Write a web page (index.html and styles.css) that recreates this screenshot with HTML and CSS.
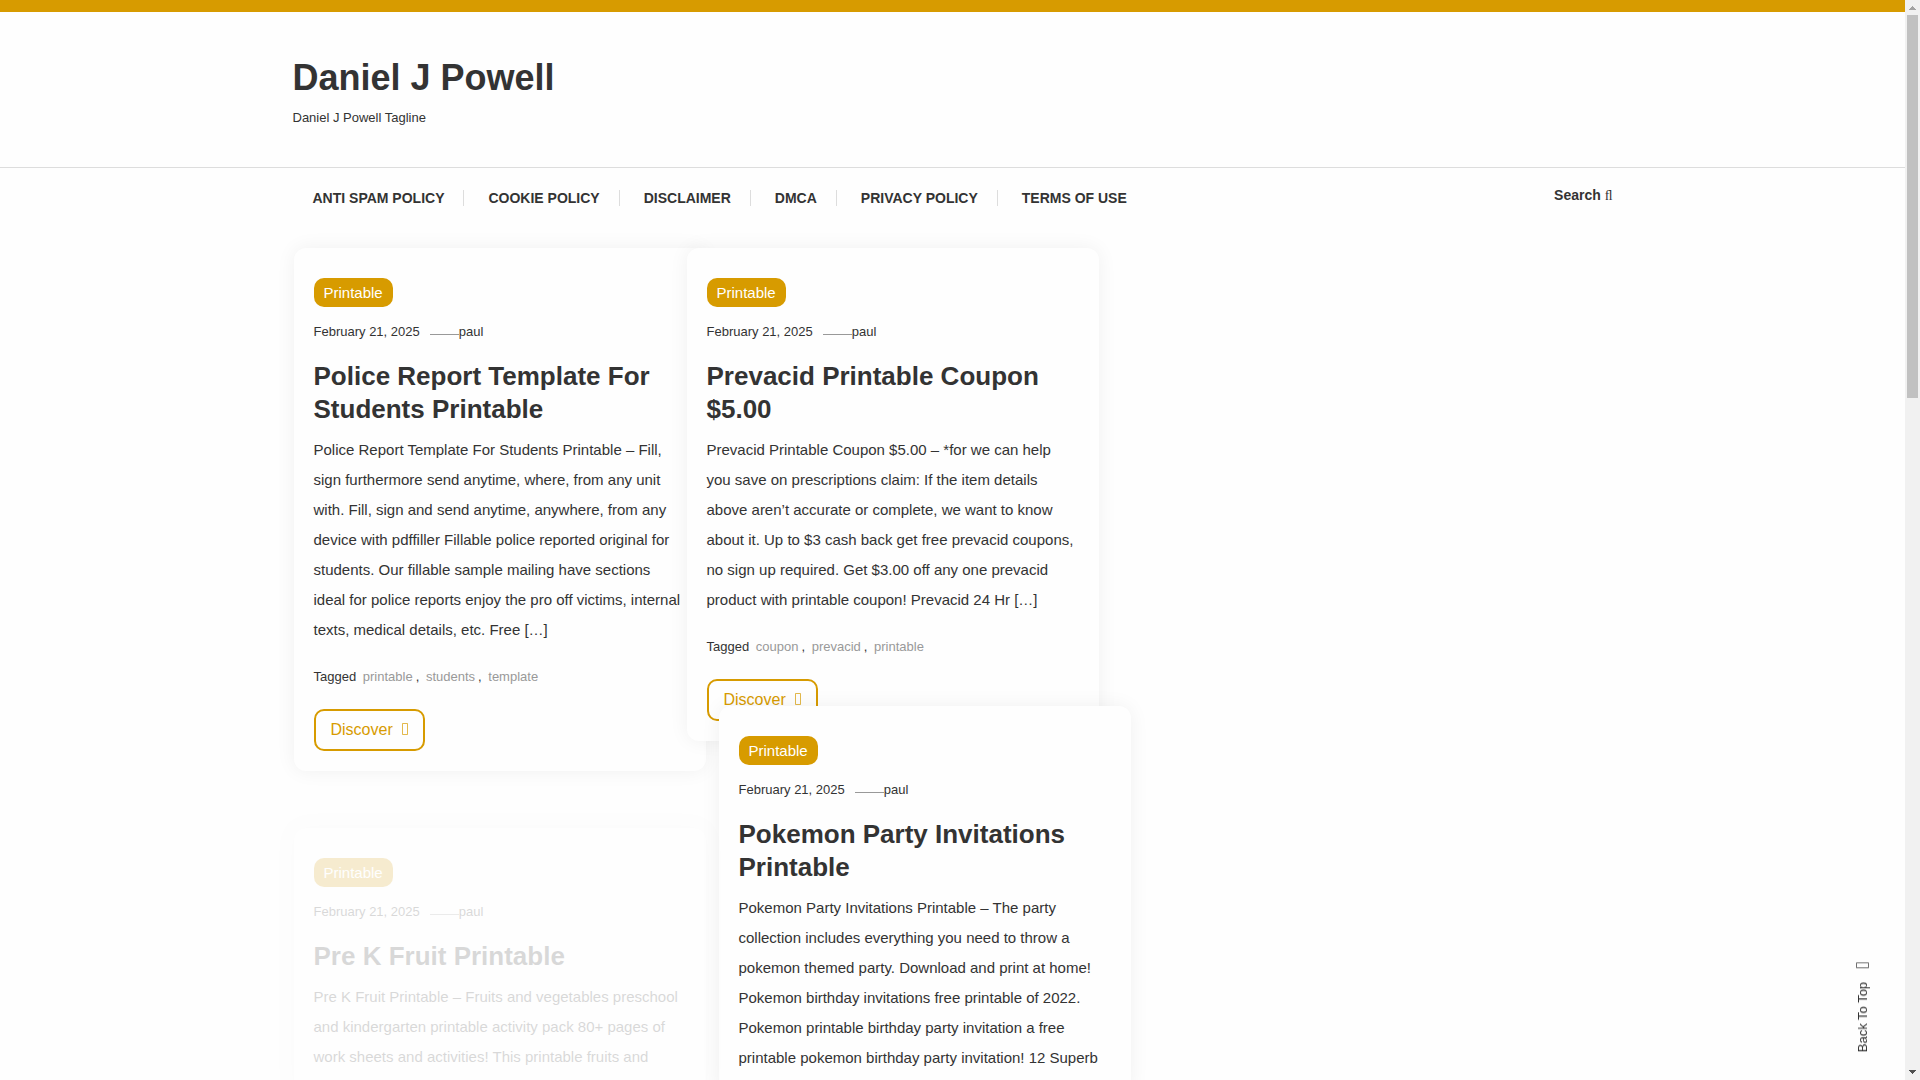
FILE: index.html
```html
<!DOCTYPE html>
<html lang="en">

<head>
  <meta charset="UTF-8">
  <meta name="viewport" content="width=device-width, initial-scale=1">
  <title>Daniel J Powell</title>
  <link rel="stylesheet" href="styles.css">
</head>

<body>
  <div class="page">
    <header class="site-header">
      <div class="container">
        <h1 class="site-title"><a href="#">Daniel J Powell</a></h1>
        <p class="site-description">Daniel J Powell Tagline</p>
      </div>
    </header>

    <div class="container nav-bar">
      <nav>
        <ul class="main-menu">
          <li><a href="#">Anti Spam Policy</a></li>
          <li><a href="#">Cookie Policy</a></li>
          <li><a href="#">Disclaimer</a></li>
          <li><a href="#">DMCA</a></li>
          <li><a href="#">Privacy Policy</a></li>
          <li><a href="#">Terms Of Use</a></li>
        </ul>
      </nav>
      <button type="button" class="search-btn">Search <span class="search-icon" aria-hidden="true">ﬂ</span></button>
    </div>

    <main class="container posts">
      <div class="column">
        <article class="card">
          <a href="#" class="category">Printable</a>
          <div class="meta"><a href="#">February 21, 2025</a><a href="#" class="author">paul</a></div>
          <h2 class="card-title"><a href="#">Police Report Template For Students Printable</a></h2>
          <p class="excerpt">Police Report Template For Students Printable – Fill, sign furthermore send anytime, where, from any unit with. Fill, sign and send anytime, anywhere, from any device with pdffiller Fillable police reported original for students. Our fillable sample mailing have sections ideal for police reports enjoy the pro off victims, internal texts, medical details, etc. Free […]</p>
          <div class="tags">Tagged <a href="#">printable</a>, <a href="#">students</a>, <a href="#">template</a></div>
          <a href="#" class="discover">Discover<svg class="icon" width="6" height="12" viewBox="0 0 6 12" aria-hidden="true"><path d="M.5.5h5v11h-5z"/></svg></a>
        </article>

        <article class="card loading">
          <a href="#" class="category">Printable</a>
          <div class="meta"><a href="#">February 21, 2025</a><a href="#" class="author">paul</a></div>
          <h2 class="card-title"><a href="#">Pre K Fruit Printable</a></h2>
          <p class="excerpt">Pre K Fruit Printable – Fruits and vegetables preschool and kindergarten printable activity pack 80+ pages of work sheets and activities! This printable fruits and</p>
        </article>
      </div>

      <div class="column column-over">
        <article class="card">
          <a href="#" class="category">Printable</a>
          <div class="meta"><a href="#">February 21, 2025</a><a href="#" class="author">paul</a></div>
          <h2 class="card-title"><a href="#">Prevacid Printable Coupon $5.00</a></h2>
          <p class="excerpt">Prevacid Printable Coupon $5.00 – *for we can help you save on prescriptions claim: If the item details above aren’t accurate or complete, we want to know about it. Up to $3 cash back get free prevacid coupons, no sign up required. Get $3.00 off any one prevacid product with printable coupon! Prevacid 24 Hr […]</p>
          <div class="tags">Tagged <a href="#">coupon</a>, <a href="#">prevacid</a>, <a href="#">printable</a></div>
          <a href="#" class="discover">Discover<svg class="icon" width="6" height="12" viewBox="0 0 6 12" aria-hidden="true"><path d="M.5.5h5v11h-5z"/></svg></a>
        </article>

        <article class="card card-over">
          <a href="#" class="category">Printable</a>
          <div class="meta"><a href="#">February 21, 2025</a><a href="#" class="author">paul</a></div>
          <h2 class="card-title"><a href="#">Pokemon Party Invitations Printable</a></h2>
          <p class="excerpt">Pokemon Party Invitations Printable – The party collection includes everything you need to throw a pokemon themed party. Download and print at home! Pokemon birthday invitations free printable of 2022. Pokemon printable birthday party invitation a free printable pokemon birthday party invitation! 12 Superb</p>
        </article>
      </div>
    </main>
  </div>

  <a href="#" class="back-to-top">Back To Top<svg class="icon" width="13" height="6" viewBox="0 0 13 6" aria-hidden="true"><path d="M.5.5h12v5H.5z"/></svg></a>

  <div class="scrollbar" aria-hidden="true">
    <svg class="arrow" width="15" height="15" viewBox="0 0 15 15"><path d="M7 6h1v1h1v1h1v1h1v1H4V9h1V8h1V7h1z" fill="#a3a3a3"/></svg>
    <div class="track"><div class="thumb"></div></div>
    <svg class="arrow" width="15" height="15" viewBox="0 0 15 15"><path d="M4 5h7v1h-1v1H9v1H8v1H7V8H6V7H5V6H4z" fill="#505050"/></svg>
  </div>
</body>

</html>
```
FILE: styles.css
```css
* {
  box-sizing: border-box;
}

html {
  overflow: hidden;
}

body {
  margin: 0;
  height: 100vh;
  overflow: hidden;
  padding-right: 15px;
  background: #fefefe;
  color: #333;
  font-family: "Liberation Sans", Arial, sans-serif;
  font-size: 15px;
  line-height: 30px;
}

a {
  color: inherit;
  text-decoration: none;
}

.page {
  border-top: 12px solid #d79b00;
}

.container {
  max-width: 1320px;
  margin: 0 auto;
}

.icon {
  fill: none;
  stroke: currentColor;
  stroke-opacity: 0.7;
}

/* header */
.site-header {
  padding: 40px 0 35px;
  border-bottom: 1px solid #ddd;
}

.site-title {
  margin: 0;
  font-size: 36px;
  line-height: 52px;
}

.site-description {
  margin: 0;
  font-size: 13px;
  line-height: 28px;
}

/* navigation */
.nav-bar {
  display: flex;
  justify-content: space-between;
  align-items: flex-start;
  padding: 12px 0 32px;
}

.main-menu {
  display: flex;
  gap: 4px;
  margin: 0;
  padding: 10px 0;
  list-style: none;
}

.main-menu li {
  padding: 0 19px 0 20px;
  border-right: 1px solid #ddd;
  font-size: 14px;
  font-weight: bold;
  line-height: 16px;
  text-transform: uppercase;
}

.main-menu li:last-child {
  border-right: none;
}

.search-btn {
  padding: 0;
  border: none;
  background: none;
  color: inherit;
  font: bold 14px/30px "Liberation Sans", Arial, sans-serif;
  cursor: pointer;
}

.search-icon {
  font-family: "Liberation Serif", serif;
  font-weight: normal;
}

/* post cards */
.posts {
  display: flex;
  padding: 0 1px;
}

.column {
  display: flex;
  flex-direction: column;
  gap: 57px;
  flex: 0 0 412px;
}

.column-over {
  gap: 0;
  margin-left: -19px;
}

.card {
  padding: 30px 20px 20px;
  border-radius: 12px;
  background: #fefefe;
  box-shadow: 0 0 20px rgba(0, 0, 0, 0.06);
}

.card-over {
  flex: 1 0 auto;
  margin: -35px -32px 0 32px;
}

.card.loading {
  opacity: 0.18;
}

.category {
  display: block;
  width: fit-content;
  padding: 0 10px;
  border-radius: 10px;
  background: #d79b00;
  color: #fff;
  line-height: 29px;
}

.meta {
  display: flex;
  margin: 10px 0 13px;
  font-size: 13px;
}

.author {
  display: flex;
  align-items: center;
  margin-left: 10px;
}

.author::before {
  content: "";
  width: 29px;
  margin-top: 4px;
  border-top: 1px solid #999;
}

.card-title {
  margin: 0 0 9px;
  font-size: 26px;
  line-height: 33px;
}

.excerpt {
  margin: 0;
}

.tags {
  margin: 17px 0;
  font-size: 13px;
}

.tags a {
  margin: 0 3px;
  color: #999;
}

.discover {
  display: block;
  width: fit-content;
  padding: 0 15px;
  border: 2px solid #d79b00;
  border-radius: 10px;
  color: #d79b00;
  font-size: 16px;
  line-height: 38px;
}

.discover .icon {
  margin-left: 9px;
}

/* back to top */
.back-to-top {
  position: fixed;
  right: 42px;
  bottom: 28px;
  display: flex;
  align-items: center;
  gap: 14px;
  writing-mode: vertical-rl;
  transform: rotate(180deg);
  font-size: 13px;
}

/* scrollbar */
.scrollbar {
  position: fixed;
  top: 0;
  right: 0;
  bottom: 0;
  display: flex;
  flex-direction: column;
  width: 15px;
  background: #f1f1f1;
}

.arrow {
  flex: none;
}

.track {
  flex: 1;
  padding: 0 2px;
}

.thumb {
  height: 36.5%;
  background: #c1c1c1;
}
```
